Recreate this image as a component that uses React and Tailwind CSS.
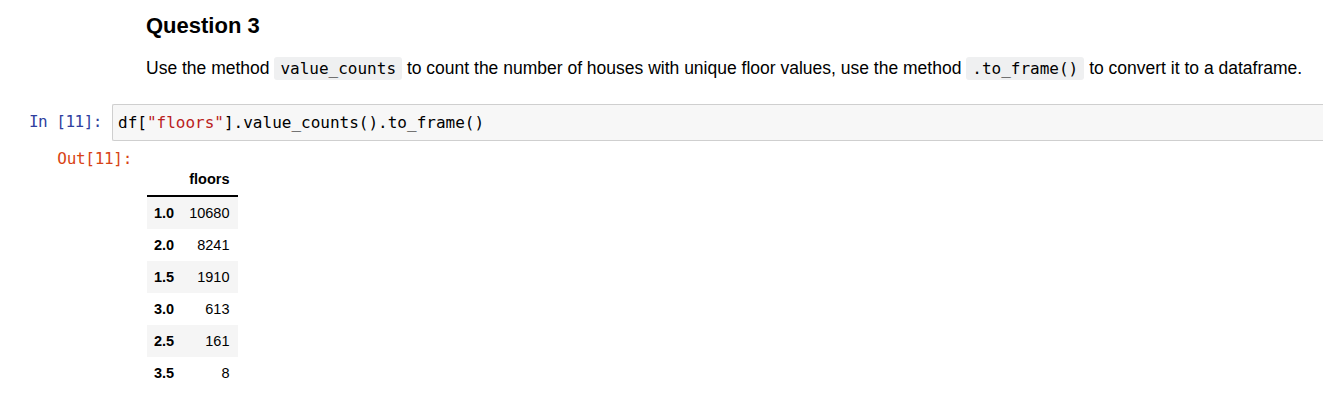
export default function App() {
  const rows = [
    ["1.0", "10680"],
    ["2.0", "8241"],
    ["1.5", "1910"],
    ["3.0", "613"],
    ["2.5", "161"],
    ["3.5", "8"],
  ];
  const mono = { fontFamily: '"DejaVu Sans Mono", "Liberation Mono", monospace' };
  return (
    <div className="w-full h-[402px] overflow-hidden bg-white text-black" style={{ fontFamily: '"Liberation Sans", Arial, sans-serif' }}>
      <div className="pl-[146px] pt-[13px]">
        <h3 className="text-[22px] font-bold leading-[26px]">Question 3</h3>
        <p className="mt-[17px] text-[17.5px] leading-[24px]">
          Use the method{" "}
          <code className="bg-[#eff0f1] rounded-[3px] px-[6px] py-[2px] text-[16px]" style={mono}>value_counts</code>{" "}
          to count the number of houses with unique floor values, use the method{" "}
          <code className="bg-[#eff0f1] rounded-[3px] px-[6px] py-[2px] text-[16px]" style={mono}>.to_frame()</code>{" "}
          to convert it to a dataframe.
        </p>
      </div>
      <div className="mt-[23px] flex items-start">
        <div className="w-[112px] shrink-0 pr-[10px] text-right text-[16px] leading-[36px] text-[#303f9f] tracking-[-0.5px]" style={mono}>
          In [11]:
        </div>
        <div className="flex-1 h-[37px] border border-r-0 border-[#cfcfcf] bg-[#f7f7f7] rounded-l-[2px] pl-[5px] text-[16px] leading-[35px]" style={mono}>
          df[<span className="text-[#ba2121]">"floors"</span>].value_counts().to_frame()
        </div>
      </div>
      <div className="flex items-start">
        <div className="w-[135px] shrink-0 pr-[3px] pt-[8px] text-right text-[16px] leading-[20px] text-[#d84315] tracking-[-0.3px]" style={mono}>
          Out[11]:
        </div>
        <div className="pl-[12px] pt-[22px]">
          <table className="border-collapse text-[14.5px] leading-[17px]">
            <thead>
              <tr className="border-b-2 border-black">
                <th className="px-[7px] py-[7.5px]"></th>
                <th className="pl-[8px] pr-[8px] py-[7.5px] text-right font-bold">floors</th>
              </tr>
            </thead>
            <tbody>
              {rows.map(([k, v], i) => (
                <tr key={k} className={i % 2 === 0 ? "bg-[#f5f5f5]" : "bg-white"}>
                  <th className="pl-[7px] pr-[7px] py-[7.5px] text-left font-bold">{k}</th>
                  <td className="pl-[8px] pr-[8px] py-[7.5px] text-right">{v}</td>
                </tr>
              ))}
            </tbody>
          </table>
        </div>
      </div>
    </div>
  );
}
